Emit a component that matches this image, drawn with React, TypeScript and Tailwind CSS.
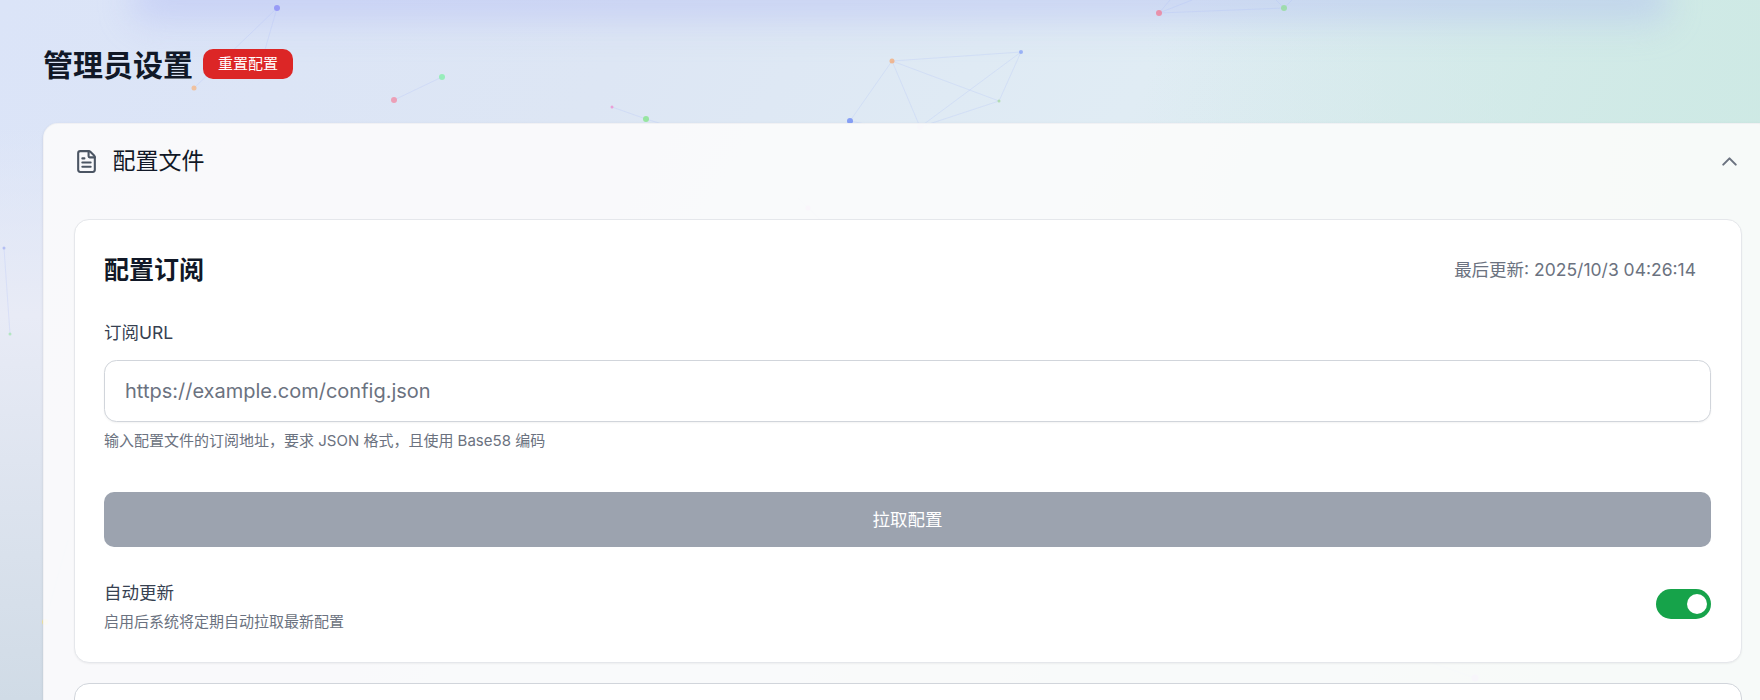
import { ChevronUp, FileText } from "lucide-react";

const nodes: [number, number, number, string][] = [
  [277, 8, 3, "#8b8cf6"],
  [194, 88, 2.5, "#f5b98a"],
  [394, 100, 3, "#f08fa8"],
  [442, 77, 3, "#86efac"],
  [612, 107, 1.5, "#ee8fd0"],
  [646, 119, 3, "#86e58c"],
  [850, 121, 3, "#6f8cf5"],
  [892, 61, 2.5, "#f4ad7c"],
  [1021, 52, 2, "#8aa5f5"],
  [999, 101, 1.5, "#a9d9a0"],
  [1159, 13, 3, "#ee7f98"],
  [1284, 8, 3, "#93dc9c"],
  [4, 248, 1.5, "#a9b4f2"],
  [10, 334, 1.5, "#a6e6b4"],
  [45, 622, 3, "#fde68a"],
  [808, 208, 2.5, "#f0abfc"],
  [920, 127, 3, "#e9d5ff"],
  [1475, 678, 3.5, "#d8b4fe"],
];

const links: [number, number, number, number][] = [
  [277, 8, 194, 88],
  [277, 8, 262, 60],
  [394, 100, 442, 77],
  [612, 107, 646, 119],
  [646, 119, 662, 124],
  [850, 121, 892, 61],
  [892, 61, 920, 127],
  [892, 61, 999, 101],
  [892, 61, 1021, 52],
  [1021, 52, 999, 101],
  [1021, 52, 920, 127],
  [999, 101, 920, 127],
  [850, 121, 865, 124],
  [1159, 13, 1284, 8],
  [1159, 13, 1170, 0],
  [1159, 13, 1192, 0],
  [1284, 8, 1276, 0],
  [1284, 8, 1292, 0],
  [4, 248, 10, 334],
  [45, 622, 68, 540],
  [808, 208, 798, 198],
  [808, 208, 820, 219],
  [1475, 678, 1430, 662],
];

export default function App() {
  return (
    <div className="relative h-[700px] w-full overflow-hidden bg-[linear-gradient(120deg,#dbe4f8_0%,#dde6f4_30%,#e0ecf4_55%,#cfeae5_94%)] font-['Inter','Noto_Sans_CJK_SC',sans-serif] text-[#111827]">
      <div className="absolute inset-0 bg-[linear-gradient(90deg,rgba(205,233,228,0)_65%,rgba(205,233,228,0.85)_100%)]" />
      <div className="absolute inset-y-0 left-0 w-[43px] bg-[linear-gradient(180deg,rgba(232,234,247,0)_18%,#e8ebf6_45%,#d0dbe6_100%)]" />
      <div className="absolute -top-[18px] left-[130px] right-[90px] h-[48px] rounded-full bg-[linear-gradient(180deg,rgba(170,180,245,0.6),rgba(170,180,245,0.1))] blur-lg" />
      <svg className="absolute inset-0 blur-[0.6px]" width="1760" height="700" aria-hidden="true">
        {links.map(([a, b, c, d], i) => (
          <line key={i} x1={a} y1={b} x2={c} y2={d} stroke="#a5b4fc" strokeOpacity="0.22" strokeWidth="1" />
        ))}
        {nodes.map(([x, y, r, fill], i) => (
          <circle key={i} cx={x} cy={y} r={r} fill={fill} fillOpacity="0.8" />
        ))}
      </svg>

      <div className="relative pl-[43px] pt-[45px]">
        <div className="mb-[38px] flex h-[40px] items-center gap-[10px]">
          <h1 className="text-[30px] leading-[40px] font-bold text-[#111827]">管理员设置</h1>
          <button className="mb-[2px] h-[30px] rounded-[10px] bg-[#dc2626] px-[15px] text-[15px] leading-[20px] text-white">
            重置配置
          </button>
        </div>

        <section className="w-[1730px] rounded-t-[15px] border border-gray-200/40 bg-[#fbfbfb]/92 shadow-sm">
          <div className="flex h-[75px] items-center justify-between px-[30px]">
            <div className="flex items-center gap-[13.5px]">
              <FileText size={25} strokeWidth={2} className="text-[#4b5563]" />
              <span className="text-[23px] leading-[35px] text-[#111827]">配置文件</span>
            </div>
            <ChevronUp size={25} strokeWidth={2} className="text-[#6b7280]" />
          </div>

          <div className="flex flex-col gap-[20px] px-[30px] pt-[20px]">
            <div className="h-[444px] rounded-[15px] border border-[#e5e7eb] bg-white pt-[30px] pr-[30px] pl-[29px] shadow-[0_1px_2px_rgba(0,0,0,0.05)]">
              <div className="mb-[35px] flex h-[35px] items-center justify-between">
                <h2 className="pt-[6px] text-[25px] leading-[35px] font-bold text-[#111827]">配置订阅</h2>
                <span className="pt-[4px] pr-[15px] text-[17.5px] leading-[25px] text-[#6b7280]">最后更新: 2025/10/3 04:26:14</span>
              </div>
              <label className="block text-[17.5px] leading-[25px] text-[#374151]">订阅URL</label>
              <input
                readOnly
                placeholder="https://example.com/config.json"
                className="mt-[14.5px] block h-[62px] w-full rounded-[12.5px] border border-[#d1d5db] bg-white pr-[19px] pl-[20px] text-[20px] shadow-[0_1px_2px_rgba(0,0,0,0.05)] outline-none placeholder:text-[#6b7280]"
              />
              <p className="mt-[9.5px] text-[15px] leading-[20px] text-[#6b7280]">
                输入配置文件的订阅地址，要求 JSON 格式，且使用 Base58 编码
              </p>
              <button className="mt-[41px] h-[55px] w-full rounded-[10px] bg-[#9ca3af] pt-[1px] text-[17.5px] text-white">
                拉取配置
              </button>
              <div className="mt-[30px] flex items-center justify-between">
                <div className="pt-[3px]">
                  <div className="text-[17.5px] leading-[25px] text-[#374151]">自动更新</div>
                  <div className="mt-[6.5px] text-[15px] leading-[20px] text-[#6b7280]">启用后系统将定期自动拉取最新配置</div>
                </div>
                <div className="flex h-[30px] w-[55px] items-center justify-end rounded-full bg-[#16a34a] pr-[4px]">
                  <div className="h-[20px] w-[20px] rounded-full bg-white" />
                </div>
              </div>
            </div>
            <div className="h-[100px] rounded-[15px] border border-[#d1d5db] bg-white" />
          </div>
        </section>
      </div>
    </div>
  );
}
